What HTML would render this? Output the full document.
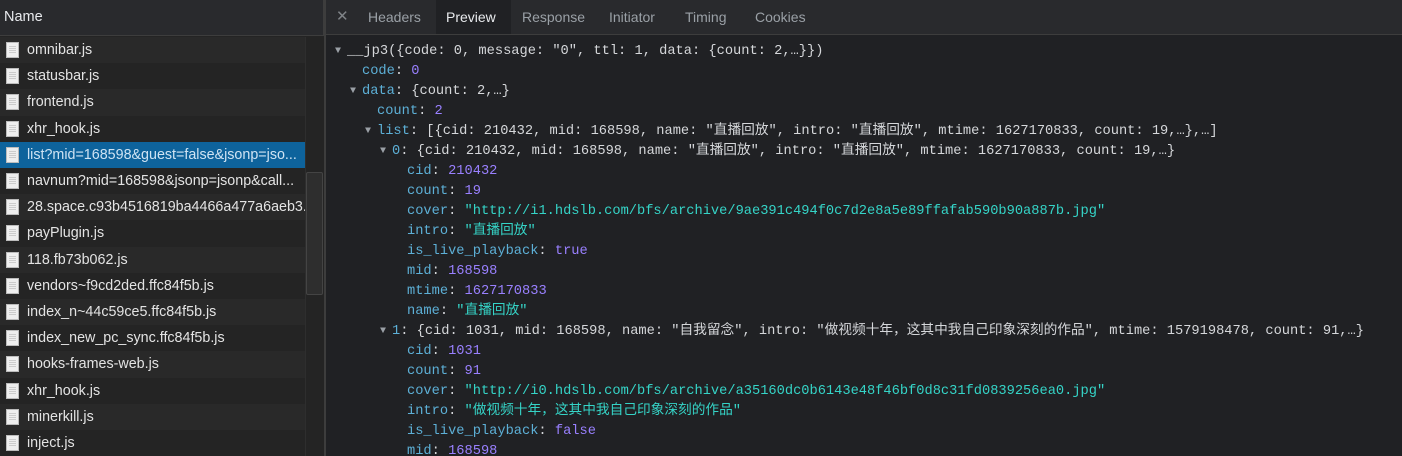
<!DOCTYPE html>
<html><head><meta charset="utf-8"><style>
*{margin:0;padding:0;box-sizing:border-box}
html,body{width:1402px;height:456px;overflow:hidden}
body{background:#202124;font-family:"Liberation Sans","Noto Sans CJK SC",sans-serif;position:relative}
#left{position:absolute;left:0;top:0;width:324px;height:456px;background:#242424}
#lh{height:36px;background:#292a2d;border-bottom:1px solid #3d3d3d;color:#e8eaed;font-size:14.5px;line-height:35px;padding-left:4px;border-right:1px solid #3d3d3d}
.row{position:absolute;left:0;width:305px;height:26.2px;color:#e3e3e3;font-size:14.3px;line-height:26px;padding-left:27px;white-space:nowrap;overflow:hidden}
.row.o{background:#292929}
.row.sel{background:#0e639c;color:#cfe3f3}
.ic{position:absolute;left:6px;top:5px;width:13px;height:16px;background:#eee;border:1px solid #bbb}
.ic:after{content:"";position:absolute;left:2px;top:3px;width:7px;height:8px;background:repeating-linear-gradient(#ccc 0 1px,transparent 1px 2px)}
#sb{position:absolute;left:305px;top:37px;width:19px;height:419px;background:#242424;border-left:1px solid #2e2e2e}
#thumb{position:absolute;left:306px;top:172px;width:17px;height:123px;background:#2e2e2e;border:1px solid #444;border-radius:2px}
#div{position:absolute;left:324px;top:0;width:2px;height:456px;background:#3d3d3d}
#tabs{position:absolute;left:326px;top:0;right:0;height:35px;background:#292a2d;border-bottom:1px solid #3d3d3d;font-size:14px;color:#9aa0a6}
#tabs span{position:absolute;top:0;line-height:34px}
#code{position:absolute;left:326px;top:42px;font-family:"Liberation Mono","Noto Sans CJK SC",monospace;font-size:13.7px;color:#d5d7da;white-space:pre}
.l{position:absolute;height:20px;line-height:20px}
.k{color:#5db0d7}.n{color:#9980ff}.s{color:#35d4c7}
.t{color:#9aa0a6;font-size:10px;position:absolute;left:-12px;top:0}
</style></head><body>
<div id="left">
<div id="lh">Name</div>
</div>
<div class="row o" style="top:37px"><i class="ic"></i>omnibar.js</div>
<div class="row" style="top:63.2px"><i class="ic"></i>statusbar.js</div>
<div class="row o" style="top:89.4px"><i class="ic"></i>frontend.js</div>
<div class="row" style="top:115.6px"><i class="ic"></i>xhr_hook.js</div>
<div class="row sel" style="top:141.8px"><i class="ic"></i>list?mid=168598&amp;guest=false&amp;jsonp=jso...</div>
<div class="row" style="top:168px"><i class="ic"></i>navnum?mid=168598&amp;jsonp=jsonp&amp;call...</div>
<div class="row o" style="top:194.2px"><i class="ic"></i>28.space.c93b4516819ba4466a477a6aeb3...</div>
<div class="row" style="top:220.4px"><i class="ic"></i>payPlugin.js</div>
<div class="row o" style="top:246.6px"><i class="ic"></i>118.fb73b062.js</div>
<div class="row" style="top:272.8px"><i class="ic"></i>vendors~f9cd2ded.ffc84f5b.js</div>
<div class="row o" style="top:299px"><i class="ic"></i>index_n~44c59ce5.ffc84f5b.js</div>
<div class="row" style="top:325.2px"><i class="ic"></i>index_new_pc_sync.ffc84f5b.js</div>
<div class="row o" style="top:351.4px"><i class="ic"></i>hooks-frames-web.js</div>
<div class="row" style="top:377.6px"><i class="ic"></i>xhr_hook.js</div>
<div class="row o" style="top:403.8px"><i class="ic"></i>minerkill.js</div>
<div class="row" style="top:430px"><i class="ic"></i>inject.js</div>
<div id="sb"></div><div id="thumb"></div>
<div id="div"></div>
<div id="tabs">
<span style="left:10px;color:#7f8387;font-size:15px">✕</span>
<span style="left:42px">Headers</span>
<span style="left:110px;width:75px;height:34px;background:#202124"></span>
<span style="left:120px;color:#e8eaed">Preview</span>
<span style="left:196px">Response</span>
<span style="left:283px">Initiator</span>
<span style="left:359px">Timing</span>
<span style="left:429px">Cookies</span>
</div>
<div id="code">
<div class="l" style="left:21px;top:0"><span class="t">▼</span>__jp3({code: 0, message: "0", ttl: 1, data: {count: 2,…}})</div>
<div class="l" style="left:36px;top:20px"><span class="k">code</span>: <span class="n">0</span></div>
<div class="l" style="left:36px;top:40px"><span class="t">▼</span><span class="k">data</span>: {count: 2,…}</div>
<div class="l" style="left:51px;top:60px"><span class="k">count</span>: <span class="n">2</span></div>
<div class="l" style="left:51px;top:80px"><span class="t">▼</span><span class="k">list</span>: [{cid: 210432, mid: 168598, name: "直播回放", intro: "直播回放", mtime: 1627170833, count: 19,…},…]</div>
<div class="l" style="left:66px;top:100px"><span class="t">▼</span><span class="k">0</span>: {cid: 210432, mid: 168598, name: "直播回放", intro: "直播回放", mtime: 1627170833, count: 19,…}</div>
<div class="l" style="left:81px;top:120px"><span class="k">cid</span>: <span class="n">210432</span></div>
<div class="l" style="left:81px;top:140px"><span class="k">count</span>: <span class="n">19</span></div>
<div class="l" style="left:81px;top:160px"><span class="k">cover</span>: <span class="s">"http://i1.hdslb.com/bfs/archive/9ae391c494f0c7d2e8a5e89ffafab590b90a887b.jpg"</span></div>
<div class="l" style="left:81px;top:180px"><span class="k">intro</span>: <span class="s">"直播回放"</span></div>
<div class="l" style="left:81px;top:200px"><span class="k">is_live_playback</span>: <span class="n">true</span></div>
<div class="l" style="left:81px;top:220px"><span class="k">mid</span>: <span class="n">168598</span></div>
<div class="l" style="left:81px;top:240px"><span class="k">mtime</span>: <span class="n">1627170833</span></div>
<div class="l" style="left:81px;top:260px"><span class="k">name</span>: <span class="s">"直播回放"</span></div>
<div class="l" style="left:66px;top:280px"><span class="t">▼</span><span class="k">1</span>: {cid: 1031, mid: 168598, name: "自我留念", intro: "做视频十年，这其中我自己印象深刻的作品", mtime: 1579198478, count: 91,…}</div>
<div class="l" style="left:81px;top:300px"><span class="k">cid</span>: <span class="n">1031</span></div>
<div class="l" style="left:81px;top:320px"><span class="k">count</span>: <span class="n">91</span></div>
<div class="l" style="left:81px;top:340px"><span class="k">cover</span>: <span class="s">"http://i0.hdslb.com/bfs/archive/a35160dc0b6143e48f46bf0d8c31fd0839256ea0.jpg"</span></div>
<div class="l" style="left:81px;top:360px"><span class="k">intro</span>: <span class="s">"做视频十年，这其中我自己印象深刻的作品"</span></div>
<div class="l" style="left:81px;top:380px"><span class="k">is_live_playback</span>: <span class="n">false</span></div>
<div class="l" style="left:81px;top:400px"><span class="k">mid</span>: <span class="n">168598</span></div>
</div>
</body></html>
